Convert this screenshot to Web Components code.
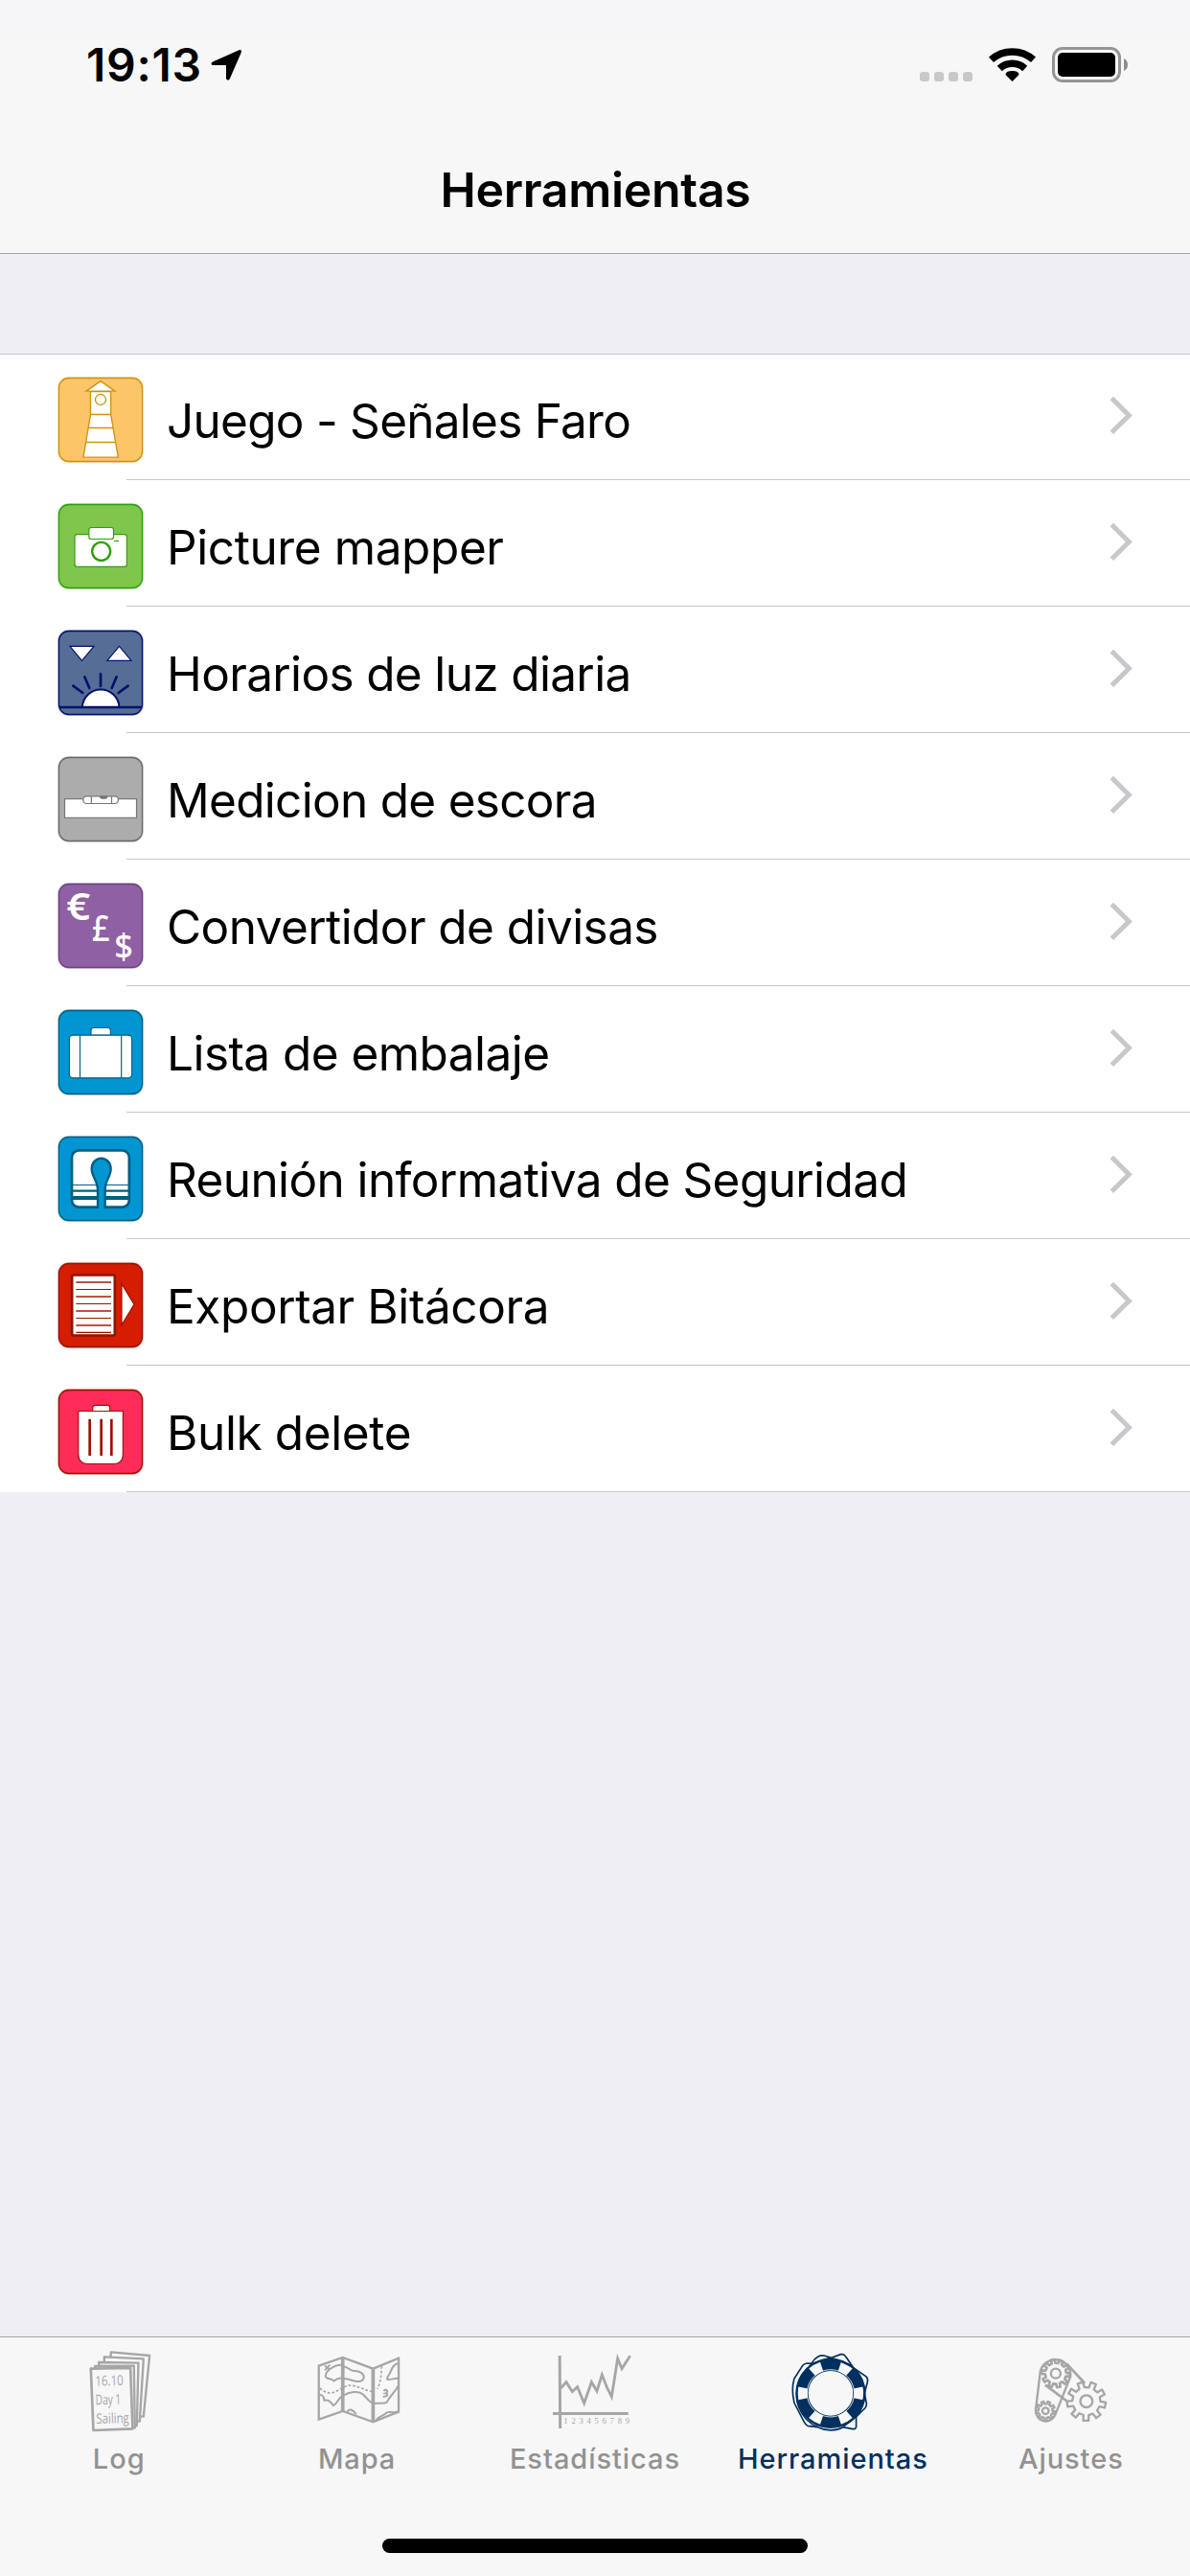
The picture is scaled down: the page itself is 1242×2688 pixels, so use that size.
<!DOCTYPE html>
<html lang="es">
<head>
<meta charset="UTF-8">
<title>Herramientas</title>
<style>
    html, body { margin: 0; padding: 0; }
    body {
        width: 1242px;
        height: 2688px;
        overflow: hidden;
        background: #efeef4;
        color: #000;
        font-family: Inter, "Liberation Sans", sans-serif;
    }
</style>
</head>
<body>
<tools-app>
    <status-bar slot="top" time="19:13"></status-bar>
    <nav-title slot="top">Herramientas</nav-title>

    <tool-row icon="lighthouse" spacing="-0.74">Juego - Señales Faro</tool-row>
    <tool-row icon="camera" spacing="-0.4">Picture mapper</tool-row>
    <tool-row icon="daylight" spacing="-0.65">Horarios de luz diaria</tool-row>
    <tool-row icon="level" spacing="-0.7">Medicion de escora</tool-row>
    <tool-row icon="currency" spacing="-0.57">Convertidor de divisas</tool-row>
    <tool-row icon="luggage" spacing="-0.55">Lista de embalaje</tool-row>
    <tool-row icon="safety" spacing="-0.6">Reunión informativa de Seguridad</tool-row>
    <tool-row icon="export" spacing="-0.4">Exportar Bitácora</tool-row>
    <tool-row icon="trash" spacing="-0.38">Bulk delete</tool-row>

    <tab-item slot="tabs" icon="log">Log</tab-item>
    <tab-item slot="tabs" icon="map">Mapa</tab-item>
    <tab-item slot="tabs" icon="stats">Estadísticas</tab-item>
    <tab-item slot="tabs" icon="ring" active>Herramientas</tab-item>
    <tab-item slot="tabs" icon="gears">Ajustes</tab-item>
</tools-app>

<script>
// Row icons. Each one is drawn on a 270 x 270 board that starts at (180, top).
const TOOL_ICONS = {
    lighthouse: {
        top: 129, fill: '#fcc567', line: '#cf9210',
        art: `
            <g fill="#fff" stroke="#cf9210" stroke-width="4">
                <path d="M270 174.500L315 143L360 174.500Z"/>
                <path d="M283.500 176H347V247L370 381.500H261L283.500 247Z"/>
                <path d="M283 247.500H347M276 289.500H354M269 334.500H361" fill="none"/>
                <circle cx="315" cy="201" r="16.500"/>
            </g>`
    },
    camera: {
        top: 525, fill: '#80c64c', line: '#2f9e0b',
        art: `
            <g fill="#fff" stroke="#2f9e0b" stroke-width="3.500">
                <rect x="234" y="623" width="163" height="101" rx="7"/>
                <rect x="278.500" y="601.500" width="77" height="36" rx="7"/>
                <circle cx="317" cy="676" r="28.500" stroke-width="7"/>
                <path d="M357 643.500H372"/>
            </g>`
    },
    daylight: {
        top: 81, fill: '#566d96', line: '#02106f',
        art: `
            <g fill="#fff" stroke="#02106f" stroke-width="3.500">
                <path d="M219 133H294L256.500 178Z"/>
                <path d="M335.500 178H411L373.500 133Z"/>
                <path d="M258 324A57 55 0 0 1 373 324Z" stroke-width="6"/>
                <path d="M186 324H444" stroke-width="8"/>
                <path d="M315 220V258M265 229L280 264M365 229L350 264M229 257L259 279M401 257L371 279" stroke-width="8" stroke-linecap="round"/>
            </g>`
    },
    level: {
        top: 477, fill: '#acacac', line: '#696969',
        art: `
            <g fill="#fff" stroke="#747474" stroke-width="3.500">
                <rect x="202.500" y="611" width="225" height="59"/>
                <rect x="260.500" y="602.500" width="110" height="23" rx="11"/>
                <path d="M286 603V625M349.500 603V625"/>
                <path d="M311 602H338Q336 611 331 611H318Q313 611 311 602Z" fill="#747474" stroke="none"/>
            </g>`
    },
    currency: {
        top: 93, fill: '#8f60a3', line: '#6b4180',
        art: `
            <g fill="#fff" font-family="'Noto Sans', sans-serif" font-weight="600">
                <text x="208" y="211" font-size="118" textLength="75" lengthAdjust="spacingAndGlyphs">€</text>
                <text x="288" y="277" font-size="113" font-weight="500" textLength="56" lengthAdjust="spacingAndGlyphs">£</text>
                <text x="358" y="331" font-size="111" font-weight="500" textLength="59" lengthAdjust="spacingAndGlyphs">$</text>
            </g>`
    },
    luggage: {
        top: 489, fill: '#0196d1', line: '#025e83',
        art: `
            <g fill="#fff" stroke="#025e83" stroke-width="3.500">
                <path d="M285 571V555Q285 547.500 293 547.500H338Q346 547.500 346 555V571Z"/>
                <rect x="217" y="570.500" width="196" height="134" rx="12"/>
                <path d="M250.500 571V704M380 571V704"/>
            </g>`
    },
    safety: {
        top: 75, fill: '#0196d1', line: '#025e83',
        art: `
            <rect x="225" y="121" width="179.500" height="178" rx="22" fill="#fff" stroke="#025e83" stroke-width="8"/>
            <path d="M228 229.500H402" stroke="#025e83" stroke-width="3"/>
            <path d="M228 248H402" stroke="#025e83" stroke-width="7"/>
            <path d="M228 270H402" stroke="#025e83" stroke-width="12"/>
            <path d="M306 305V245C306 215 287 203 287 179A30 33 0 0 1 347 179C347 203 329 215 329 245V305Z" fill="#0196d1"/>
            <path d="M306 303V245C306 215 287 203 287 179A30 33 0 0 1 347 179C347 203 329 215 329 245V303" fill="none" stroke="#025e83" stroke-width="7"/>`
    },
    export: {
        top: 471, fill: '#d41d01', line: '#9c1200',
        art: `
            <rect x="225.500" y="511.500" width="134" height="189" rx="5" fill="#fff" stroke="#8f1503" stroke-width="8"/>
            <path d="M238 534H348M238 579H348M238 624H348M238 669H348" stroke="#bb5145" stroke-width="5.500"/>
            <path d="M238 556.500H348M238 601.500H348M238 646.500H348M238 691H348" stroke="#9c1200" stroke-width="3.500"/>
            <path d="M381 539L420 603.500L381 668Z" fill="#fff" stroke="#9c1200" stroke-width="3.500"/>`
    },
    trash: {
        top: 867, fill: '#ff2b59', line: '#9c1200',
        art: `
            <g fill="#fff" stroke="#9c1200" stroke-width="3.500">
                <path d="M290.500 938V926Q290.500 919 298 919H337Q344 919 344 926V938Z"/>
                <path d="M245.500 937.500H385V1072Q385 1102.500 355 1102.500H276Q245.500 1102.500 245.500 1072Z"/>
                <path d="M281 962V1077M317 962V1077M349 962V1077" stroke-width="8"/>
            </g>`
    }
};

function gearPath(cx, cy, teeth, outer, inner, turn) {
    const step = (Math.PI * 2) / teeth;
    const at = (r, a) => `${(cx + r * Math.cos(a)).toFixed(1)} ${(cy + r * Math.sin(a)).toFixed(1)}`;
    let d = '';
    for (let i = 0; i < teeth; i++) {
        const a = turn + i * step;
        d += `${i ? 'L' : 'M'}${at(inner, a - step * 0.27)}L${at(outer, a - step * 0.2)}`;
        d += `L${at(outer, a + step * 0.2)}L${at(inner, a + step * 0.27)}`;
    }
    return d + 'Z';
}

function ringPatches(cx, cy, r, half) {
    let d = '';
    for (let i = 0; i < 6; i++) {
        const a = (i * Math.PI) / 3;
        const p = (t) => `${(cx + r * Math.cos(t)).toFixed(1)} ${(cy + r * Math.sin(t)).toFixed(1)}`;
        d += `M${p(a - half)}A${r} ${r} 0 0 1 ${p(a + half)}`;
    }
    return d;
}

// Tab icons, on 300 x 300 boards.
const TAB_ICONS = {
    log: {
        box: '42.600 75 300 300',
        art: `
            <g fill="#f7f7f7" stroke="#a6a6a6" stroke-width="7" stroke-linejoin="round">
                <path d="M168 103L289 114L270 305L160 300Z"/>
                <path d="M147 118L270 124L258 320L150 320Z"/>
                <path d="M130 135L254 137L249 334L140 330Z"/>
                <path d="M118 147L240 146L243 340L125 340Z"/>
                <path d="M105 155L229 153L236 343L113 348Z" stroke-width="8"/>
            </g>
            <g fill="#a6a6a6" font-family="'Open Sans', sans-serif" font-size="44">
                <text x="119" y="209" textLength="88" lengthAdjust="spacingAndGlyphs" transform="rotate(-1.500 119 209)">16.10</text>
                <text x="120" y="268" textLength="80" lengthAdjust="spacingAndGlyphs" transform="rotate(-1.500 120 268)">Day 1</text>
                <text x="122" y="327" textLength="103" lengthAdjust="spacingAndGlyphs" transform="rotate(-1.500 122 327)">Sailing</text>
            </g>`
    },
    map: {
        box: '787.800 75 300 300',
        art: `
            <g fill="none" stroke="#a6a6a6" stroke-width="6">
                <path d="M817 146L892 120L987 155L1067 122V290L987 322L892 288L817 314Z" stroke-width="7"/>
                <path d="M892 120V288M987 155V322" stroke-width="11"/>
                <path d="M836 146L852 158M852 143L836 160M888 143C862 142 838 165 838 178C840 190 856 184 864 193C874 186 884 184 892 184M892 150C906 146 912 160 926 162C944 160 960 172 958 184C954 198 936 196 922 192C912 188 902 186 895 186"/>
                <path d="M818 236C830 238 832 240 834 254C848 252 854 258 862 270C874 266 880 244 892 240C912 228 940 222 956 236C968 246 974 262 990 264C1006 260 1018 268 1030 260C1040 240 1056 228 1066 208"/>
                <path d="M1066 138C1048 142 1046 156 1040 168C1034 180 1026 188 1034 189C1044 190 1054 184 1066 185"/>
                <path d="M906 290C912 278 926 284 934 298M996 316C1010 300 1020 304 1030 292C1042 288 1052 296 1066 288"/>
                <path d="M820 216C836 230 854 236 870 226C892 216 904 204 922 208C944 210 962 224 984 226M1014 147C1012 174 1012 198 1000 218" stroke-width="5" stroke-dasharray="8 6"/>
                <path d="M1020 224C1030 216 1036 228 1026 232C1036 234 1032 244 1018 242"/>
            </g>`
    },
    stats: {
        box: '213 75 300 300',
        art: `
            <g fill="none" stroke="#a6a6a6" stroke-width="8.500">
                <path d="M252.500 114L254 342" stroke-width="9"/>
                <path d="M231 295.500H467"/>
                <path d="M256 216L273 197L292 227L308 212L329 263L352 197L369 225L385 174L401 215L415 243L434 123L447 155L473 115"/>
            </g>
            <text x="265" y="326" fill="#a6a6a6" font-family="'Liberation Serif', serif" font-size="26" textLength="206">123456789</text>`
    },
    ring: {
        box: '958.200 75 300 300',
        art: `
            <g fill="none">
                <circle cx="1102" cy="232" r="90" stroke="#00305f" stroke-width="40"/>
                <path d="${ringPatches(1102, 232, 88, 0.2)}" stroke="#f7f7f7" stroke-width="30"/>
                <circle cx="1102" cy="232" r="74" stroke="#f7f7f7" stroke-width="2.500"/>
                <g stroke="#00305f" stroke-width="5">
                    <path d="M1042 139C1054 118 1072 110 1084 115L1104 121L1134 110Q1144 108 1150 118L1172 151L1214 180Q1220 188 1217 198L1208 232L1214 262Q1216 274 1206 282L1182 306V338Q1180 346 1168 343L1140 338C1120 350 1090 352 1062 338L1030 334Q1024 332 1018 320L988 262C982 236 982 206 988 186L1010 152Q1016 139 1030 138Z"/>
                    <path d="M1042 139L1088 124Q1104 118 1120 126L1172 151C1190 172 1206 198 1208 232C1204 262 1200 288 1182 306L1140 338M1062 338C1036 328 1014 306 1002 276C990 246 996 206 1008 184L1042 139" stroke-width="4"/>
                </g>
            </g>`
    },
    gears: {
        box: '203.400 75 300 300',
        art: `
            <g fill="none" stroke="#a6a6a6" stroke-width="7" stroke-linejoin="round">
                <path d="M257 162L242 286A32 33 0 0 0 304 298L351 180A48 48 0 0 0 257 162Z"/>
                <path d="M339 139L396 201M272 206L350 264" stroke-width="8"/>
                <path d="${gearPath(305, 170, 10, 44, 33, 0.1)}" stroke-width="8"/>
                <circle cx="305" cy="170" r="15"/>
                <path d="${gearPath(273, 287, 9, 30, 22, 0.2)}"/>
                <circle cx="273" cy="287" r="10"/>
                <path d="${gearPath(401, 257, 9, 61, 44, 0.2)}" fill="#f7f7f7"/>
                <circle cx="401" cy="257" r="19"/>
            </g>`
    }
};

class ToolsApp extends HTMLElement {
    constructor() {
        super();
        this.attachShadow({ mode: 'open' });
    }

    connectedCallback() {
        this.shadowRoot.innerHTML = `
            <style>
                :host { display: flex; flex-direction: column; width: 1242px; height: 2688px; background: #efeef4; }
                header { flex: none; height: 264px; background: linear-gradient(#f6f6f8 40px, #f7f7f7 40px); border-bottom: 1px solid #a7a7ab; }
                main { flex: 1; padding-top: 104px; }
                .list { background: #fff; border-top: 1px solid #c8c7cc; }
                footer { flex: none; height: 249px; background: #f7f7f7; border-top: 1px solid #a7a7ab; display: flex; flex-direction: column; }
                nav { display: grid; grid-template-columns: repeat(5, 1fr); flex: 1; }
                .home { width: 444px; height: 15px; border-radius: 8px; background: #000; margin: 0 auto 24px; }
            </style>
            <header><slot name="top"></slot></header>
            <main><div class="list"><slot></slot></div></main>
            <footer>
                <nav><slot name="tabs"></slot></nav>
                <div class="home"></div>
            </footer>
        `;
    }
}

class StatusBar extends HTMLElement {
    constructor() {
        super();
        this.attachShadow({ mode: 'open' });
    }

    connectedCallback() {
        this.shadowRoot.innerHTML = `
            <style>
                :host { display: flex; height: 132px; justify-content: space-between; }
                .left { display: flex; padding: 38px 0 0 90px; }
                .time { font-size: 48px; line-height: 60px; font-weight: 600; letter-spacing: 0.7px; width: 123px; white-space: nowrap; }
                .left svg { margin: 12px 0 0 5px; }
                .right { padding: 44px 59px 0 0; }
                svg { display: block; }
            </style>
            <div class="left">
                <span class="time">${this.getAttribute('time')}</span>
                <svg width="36" height="36" viewBox="218 50 36 36">
                    <path d="M249.500 52.200L222 64.500C219.800 65.700 220.400 68 222.600 68.100H235.500Q236 68.100 236 68.800V81.500C236.300 84 239 84.200 239.900 82L251.900 54.600C252.500 52.600 251.200 51.500 249.500 52.200Z"/>
                </svg>
            </div>
            <div class="right">
                <svg width="225" height="46" viewBox="958 44 225 46">
                    <g fill="#c8c8c8">
                        <rect x="960" y="75" width="10" height="10" rx="3"/>
                        <rect x="975" y="75" width="10" height="10" rx="3"/>
                        <rect x="990" y="75" width="10" height="10" rx="3"/>
                        <rect x="1005" y="75" width="10" height="10" rx="3"/>
                    </g>
                    <g fill="none" stroke="#000">
                        <path d="M1034.500 62.300A33 33 0 0 1 1078.500 62.300" stroke-width="7.500"/>
                        <path d="M1043.300 71.500A19.500 19.500 0 0 1 1069.700 71.500" stroke-width="7.500"/>
                    </g>
                    <path d="M1056.500 85L1049.500 78Q1049.500 74 1056.500 74Q1063.500 74 1063.500 78Z"/>
                    <rect x="1099.500" y="50.500" width="69" height="34" rx="9.500" fill="none" stroke="#959595" stroke-width="3"/>
                    <rect x="1104" y="55" width="60" height="25" rx="5"/>
                    <path d="M1173 61Q1177 63 1177 67.500Q1177 72 1173 74Z" fill="#8c8c8c"/>
                </svg>
            </div>
        `;
    }
}

class NavTitle extends HTMLElement {
    constructor() {
        super();
        this.attachShadow({ mode: 'open' });
    }

    connectedCallback() {
        this.shadowRoot.innerHTML = `
            <style>
                :host { display: block; height: 132px; line-height: 132px; text-align: center; font-size: 50px; font-weight: 600; letter-spacing: -0.3px; text-indent: 1px; }
            </style>
            <slot></slot>
        `;
    }
}

class ToolRow extends HTMLElement {
    constructor() {
        super();
        this.attachShadow({ mode: 'open' });
    }

    connectedCallback() {
        const icon = TOOL_ICONS[this.getAttribute('icon')];
        const spacing = this.getAttribute('spacing') || '0';
        const box = `x="184.500" y="${icon.top + 4.5}" width="261" height="261" rx="31"`;

        this.shadowRoot.innerHTML = `
            <style>
                :host { display: block; height: 132px; }
                :host(:first-of-type) { margin-top: -1px; }
                .row { display: flex; box-sizing: border-box; height: 131px; padding: 24px 58px 0 60px; }
                .icon { flex: none; display: block; overflow: visible; }
                .label { flex: 1; margin: 21px 0 0 24px; font-size: 49.5px; line-height: 50px; letter-spacing: ${spacing}px; white-space: nowrap; }
                .chevron { flex: none; display: block; margin-top: 19px; }
                .line { height: 1px; margin-left: 132px; background: #c8c7cc; }
            </style>
            <div class="row">
                <svg class="icon" width="90" height="90" viewBox="180 ${icon.top} 270 270">
                    <rect ${box} fill="none" stroke="${icon.line}" stroke-width="9" opacity="0.250"/>
                    <rect ${box} fill="${icon.fill}" stroke="${icon.line}" stroke-width="3.800"/>
                    ${icon.art}
                </svg>
                <div class="label"><slot></slot></div>
                <svg class="chevron" width="26" height="42" viewBox="1158 412 26 42">
                    <path d="M1160.300 415.500L1178.300 433.400L1160.300 451.300" fill="none" stroke="#c7c7cc" stroke-width="5"/>
                </svg>
            </div>
            <div class="line"></div>
        `;
    }
}

class TabItem extends HTMLElement {
    constructor() {
        super();
        this.attachShadow({ mode: 'open' });
    }

    connectedCallback() {
        const icon = TAB_ICONS[this.getAttribute('icon')];
        this.shadowRoot.innerHTML = `
            <style>
                :host { display: flex; flex-direction: column; align-items: center; padding-top: 6px; color: #929292; }
                :host([active]) { color: #00305f; }
                svg { display: block; }
                .label { font-size: 29px; line-height: 42px; font-weight: 500; letter-spacing: 0.95px; white-space: nowrap; }
            </style>
            <svg width="100" height="100" viewBox="${icon.box}">${icon.art}</svg>
            <div class="label"><slot></slot></div>
        `;
    }
}

customElements.define('tools-app', ToolsApp);
customElements.define('status-bar', StatusBar);
customElements.define('nav-title', NavTitle);
customElements.define('tool-row', ToolRow);
customElements.define('tab-item', TabItem);
</script>
</body>
</html>
